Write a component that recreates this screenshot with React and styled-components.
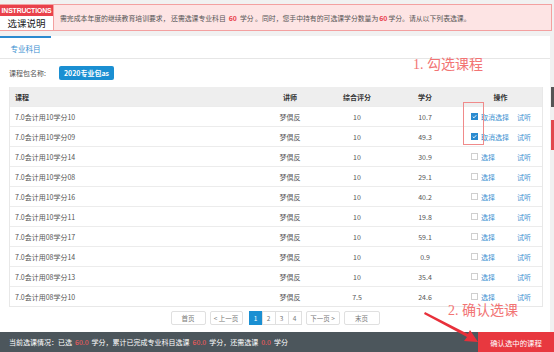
import React from 'react';
import styled, { createGlobalStyle } from 'styled-components';

const GlobalStyle = createGlobalStyle`
  html, body {
    margin: 0;
    padding: 0;
    background: #f1f1f1;
  }
  * {
    box-sizing: border-box;
  }
`;

const FONT = `"Noto Sans CJK SC", "Liberation Sans", sans-serif`;

const Page = styled.div`
  position: relative;
  width: 554px;
  height: 352px;
  overflow: hidden;
  display: flex;
  flex-direction: column;
  background: #f1f1f1;
  font-family: ${FONT};
  color: #555;
`;

const Banner = styled.div`
  display: flex;
  height: 27px;
  margin: 4px 2px 0 0;
  border: 1px solid #f3a0a0;
  border-left: none;
  background: #fde4e4;
`;

const Badge = styled.div`
  width: 54px;
  display: flex;
  flex-direction: column;
  border-right: 1px solid #f3a0a0;
`;

const BadgeTop = styled.div`
  height: 13px;
  background: #e9414b;
  color: #fff;
  font-family: "Liberation Sans", sans-serif;
  font-weight: bold;
  font-size: 6.9px;
  letter-spacing: -0.15px;
  display: flex;
  align-items: center;
  justify-content: center;
`;

const BadgeBottom = styled.div`
  flex: 1;
  background: #fff;
  color: #222;
  font-size: 9.5px;
  display: flex;
  align-items: center;
  justify-content: center;
`;

const Message = styled.div`
  display: flex;
  align-items: center;
  padding-left: 6px;
  font-size: 6.85px;
  color: #555;
  white-space: nowrap;
`;

const Hot = styled.span`
  color: #e9414b;
  font-weight: bold;
  margin: 0 ${(p) => p.$space || 0}px;
`;

const Panel = styled.div`
  flex: 1;
  width: 550px;
  margin-top: 5px;
  background: #fff;
  display: flex;
  flex-direction: column;
`;

const TabBar = styled.div`
  height: 23px;
  display: flex;
  border-bottom: 1px solid #e6e6e6;
`;

const Tab = styled.div`
  width: 51px;
  border-top: 2px solid #2a8bd0;
  color: #3a8fd0;
  font-size: 7.5px;
  display: flex;
  align-items: center;
  justify-content: center;
`;

const FilterRow = styled.div`
  height: 28px;
  display: flex;
  align-items: center;
  padding-left: 9px;
  font-size: 7px;
  color: #555;
`;

const PackButton = styled.div`
  margin-left: 13px;
  height: 14px;
  padding: 0 5px;
  background: #1a8fd2;
  border-radius: 2px;
  color: #fff;
  font-size: 7px;
  font-weight: bold;
  display: flex;
  align-items: center;
`;

const Table = styled.div`
  margin: 0 7px 0 9px;
  border: 1px solid #e8e8e8;
  border-top: none;
`;

const Row = styled.div`
  display: grid;
  grid-template-columns: 247px 66px 68px 68px 83px;
  height: ${(p) => (p.$head ? 19 : 20)}px;
  align-items: center;
  background: ${(p) => (p.$head ? '#eeeeee' : '#fff')};
  border-top: ${(p) => (p.$head ? 'none' : '1px solid #ececec')};
  font-size: 7px;
  color: ${(p) => (p.$head ? '#333' : '#555')};
  font-weight: ${(p) => (p.$head ? 'bold' : 'normal')};
`;

const Cell = styled.div`
  text-align: ${(p) => (p.$left ? 'left' : 'center')};
  padding-left: ${(p) => (p.$left ? 5 : 0)}px;
  white-space: nowrap;
`;

const Actions = styled.div`
  display: flex;
  align-items: center;
  padding: 0 11px 0 12px;
`;

const Box = styled.span`
  width: 7px;
  height: 7px;
  border: 1px solid ${(p) => (p.$on ? '#2a8bd0' : '#cfcfcf')};
  background: ${(p) => (p.$on ? '#2a8bd0' : '#fff')};
  display: flex;
  align-items: center;
  justify-content: center;
  margin-right: 3px;
`;

const Link = styled.span`
  color: #3a8fd0;
  margin-left: ${(p) => (p.$push ? 'auto' : '0')};
`;

const Pager = styled.div`
  flex: 1;
  display: flex;
  align-items: center;
  justify-content: center;
  gap: 4px;
  padding-bottom: 4px;
  font-size: 6.5px;
  color: #777;
`;

const PageBtn = styled.div`
  height: 14px;
  width: ${(p) => p.$w}px;
  border: 1px solid #e0e0e0;
  border-radius: 2px;
  display: flex;
  align-items: center;
  justify-content: center;
  background: #fff;
`;

const PageGroup = styled.div`
  display: flex;
  margin-left: 3px;
`;

const PageNum = styled.div`
  height: 14px;
  width: 14px;
  border: 1px solid ${(p) => (p.$on ? '#1a8fd2' : '#e0e0e0')};
  margin-left: -1px;
  background: ${(p) => (p.$on ? '#1a8fd2' : '#fff')};
  color: ${(p) => (p.$on ? '#fff' : '#777')};
  display: flex;
  align-items: center;
  justify-content: center;
`;

const BottomBar = styled.div`
  height: 20px;
  display: flex;
  background: #4c565c;
`;

const Summary = styled.div`
  flex: 1;
  display: flex;
  align-items: center;
  padding-left: 9px;
  font-size: 7px;
  color: #fff;
  white-space: nowrap;
`;

const Num = styled.span`
  color: #ff5b5b;
  margin: 0 3px;
`;

const ConfirmButton = styled.div`
  width: 76px;
  background: #e8383f;
  color: #fff;
  font-size: 7.4px;
  display: flex;
  align-items: center;
  justify-content: center;
`;

const Note = styled.div`
  position: absolute;
  left: ${(p) => p.$x}px;
  top: ${(p) => p.$y}px;
  color: #f27474;
  font-size: 14px;
  line-height: 14px;
  font-family: "Liberation Serif", "Noto Sans CJK SC", serif;
  white-space: nowrap;
`;

const Frame = styled.div`
  position: absolute;
  left: 463px;
  top: 102px;
  width: 21px;
  height: 43px;
  border: 1px solid #f08a8a;
`;

const Arrow = styled.svg`
  position: absolute;
  left: 420px;
  top: 308px;
`;

const Edge = styled.div`
  position: absolute;
  right: 0;
  top: ${(p) => p.$y}px;
  width: 3px;
  height: ${(p) => p.$h}px;
  background: ${(p) => p.$c};
`;

const rows = [
  ['7.0会计用10学分10', '10', '10.7', true],
  ['7.0会计用10学分09', '10', '49.3', true],
  ['7.0会计用10学分14', '10', '30.9', false],
  ['7.0会计用10学分08', '10', '29.1', false],
  ['7.0会计用10学分16', '10', '40.2', false],
  ['7.0会计用10学分11', '10', '19.8', false],
  ['7.0会计用08学分17', '10', '59.1', false],
  ['7.0会计用08学分14', '10', '0.9', false],
  ['7.0会计用08学分13', '10', '35.4', false],
  ['7.0会计用08学分10', '7.5', '24.6', false],
];

const Check = () => (
  <svg width="5" height="5" viewBox="0 0 10 10">
    <path d="M1.5 5.2 L4 7.6 L8.6 2.4" fill="none" stroke="#fff" strokeWidth="1.8" />
  </svg>
);

export default function App() {
  return (
    <>
      <GlobalStyle />
      <Page>
        <Banner>
          <Badge>
            <BadgeTop>INSTRUCTIONS</BadgeTop>
            <BadgeBottom>选课说明</BadgeBottom>
          </Badge>
          <Message>
            需完成本年度的继续教育培训要求， 还需选课专业科目<Hot $space={3}>60</Hot>学分 。同时，您手中持有的可选课学分数量为
            <Hot $space={1}>60</Hot>学分。请从以下列表选课。
          </Message>
        </Banner>

        <Panel>
          <TabBar>
            <Tab>专业科目</Tab>
          </TabBar>
          <FilterRow>
            课程包名称:
            <PackButton>2020专业包as</PackButton>
          </FilterRow>
          <Table>
            <Row $head>
              <Cell $left>课程</Cell>
              <Cell>讲师</Cell>
              <Cell>综合评分</Cell>
              <Cell>学分</Cell>
              <Cell>操作</Cell>
            </Row>
            {rows.map(([name, score, credit, on]) => (
              <Row key={name}>
                <Cell $left>{name}</Cell>
                <Cell>梦倶反</Cell>
                <Cell>{score}</Cell>
                <Cell>{credit}</Cell>
                <Actions>
                  <Box $on={on}>{on && <Check />}</Box>
                  <Link>{on ? '取消选择' : '选择'}</Link>
                  <Link $push>试听</Link>
                </Actions>
              </Row>
            ))}
          </Table>
          <Pager>
            <PageBtn $w={35}>首页</PageBtn>
            <PageBtn $w={33}>&lt; 上一页</PageBtn>
            <PageGroup>
              <PageNum $on>1</PageNum>
              <PageNum>2</PageNum>
              <PageNum>3</PageNum>
              <PageNum>4</PageNum>
            </PageGroup>
            <PageBtn $w={34}>下一页 &gt;</PageBtn>
            <PageBtn $w={36}>末页</PageBtn>
          </Pager>
        </Panel>

        <BottomBar>
          <Summary>
            当前选课情况：已选<Num>60.0</Num>学分，累计已完成专业科目选课<Num>60.0</Num>学分，还需选课<Num>0.0</Num>学分
          </Summary>
          <ConfirmButton>确认选中的课程</ConfirmButton>
        </BottomBar>

        <Note $x={413} $y={58}>1. 勾选课程</Note>
        <Frame />
        <Note $x={448} $y={304}>2. 确认选课</Note>
        <Arrow width="60" height="40" viewBox="0 0 60 40">
          <polygon points="5,4 48,26 50,22 58,34 44,33 47,29 4,6" fill="#e8303a" />
        </Arrow>
        <Edge $y={87} $h={20} $c="#555" />
        <Edge $y={120} $h={30} $c="#e2474c" />
      </Page>
    </>
  );
}
